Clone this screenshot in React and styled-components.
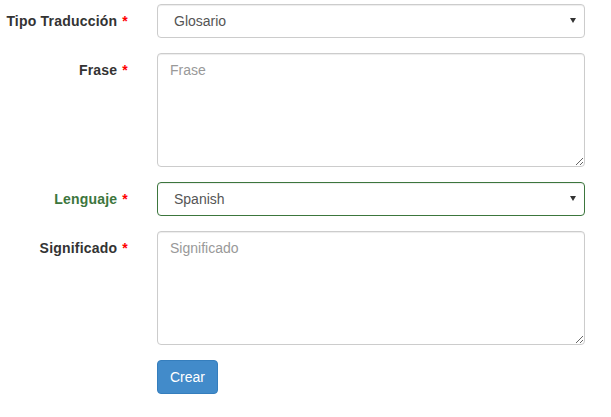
import React from 'react';
import { useState } from 'react';
import styled, { createGlobalStyle } from 'styled-components';

const GlobalStyle = createGlobalStyle`
   * {
      box-sizing: border-box;
   }
   body {
      margin: 0;
      background: #fff;
      font-family: "Liberation Sans", Arial, Helvetica, sans-serif;
      font-size: 14px;
      line-height: 20px;
      color: #333;
   }
`;

const Form = styled.form`
   display: flex;
   flex-direction: column;
   gap: 15px;
   padding: 4px 26px 0 0;
`;

const FormGroup = styled.div`
   display: grid;
   grid-template-columns: 128px 1fr;
   column-gap: 29px;
   align-items: start;
`;

const Label = styled.label`
   padding-top: 7px;
   text-align: right;
   font-weight: bold;
   letter-spacing: 0.2px;
   white-space: nowrap;
   color: ${props => props.success ? '#3c763d' : '#333'};
`;

const Required = styled.span`
   color: #f00;
   margin-left: 1px;
`;

const controlStyles = `
   display: block;
   width: 100%;
   margin: 0;
   font-family: inherit;
   font-size: 14px;
   line-height: 20px;
   color: #555;
   background-color: #fff;
   border: 1px solid #ccc;
   border-radius: 4px;
   box-shadow: inset 0 1px 1px rgba(0, 0, 0, 0.075);
   outline: none;
`;

const SelectWrapper = styled.div`
   position: relative;

   &::after {
      content: '';
      position: absolute;
      right: 9px;
      top: 14px;
      width: 0;
      height: 0;
      border-left: 3.5px solid transparent;
      border-right: 3.5px solid transparent;
      border-top: 5px solid #333;
      pointer-events: none;
   }
`;

const Select = styled.select`
   ${controlStyles}
   appearance: none;
   -webkit-appearance: none;
   height: 34px;
   padding: 6px 24px 6px 16px;
   border-color: ${props => props.success ? '#3c763d' : '#ccc'};
`;

const TextArea = styled.textarea`
   ${controlStyles}
   height: 114px;
   padding: 6px 12px;
   resize: vertical;

   &::placeholder {
      color: #999;
   }
`;

const PrimaryButton = styled.button`
   grid-column: 2;
   justify-self: start;
   height: 34px;
   padding: 6px 12px;
   font-family: inherit;
   font-size: 14px;
   line-height: 20px;
   color: #fff;
   background-color: #428bca;
   border: 1px solid #357ebd;
   border-radius: 4px;
   cursor: pointer;
`;

const App = () => {
    const [tipo, setTipo] = useState('glosario');
    const [frase, setFrase] = useState('');
    const [lenguaje, setLenguaje] = useState('es');
    const [significado, setSignificado] = useState('');

    const handleSubmit = (e) => {
        e.preventDefault();
    }

    return (
        <>
            <GlobalStyle />
            <Form onSubmit={handleSubmit}>
                <FormGroup>
                    <Label>Tipo Traducción <Required>*</Required></Label>
                    <SelectWrapper>
                        <Select value={tipo} onChange={(e) => setTipo(e.target.value)}>
                            <option value="glosario">Glosario</option>
                            <option value="frase">Frase</option>
                        </Select>
                    </SelectWrapper>
                </FormGroup>
                <FormGroup>
                    <Label>Frase <Required>*</Required></Label>
                    <TextArea rows={5} placeholder="Frase" value={frase} onChange={(e) => setFrase(e.target.value)} />
                </FormGroup>
                <FormGroup>
                    <Label success>Lenguaje <Required>*</Required></Label>
                    <SelectWrapper>
                        <Select success value={lenguaje} onChange={(e) => setLenguaje(e.target.value)}>
                            <option value="es">Spanish</option>
                            <option value="en">English</option>
                        </Select>
                    </SelectWrapper>
                </FormGroup>
                <FormGroup>
                    <Label>Significado <Required>*</Required></Label>
                    <TextArea rows={5} placeholder="Significado" value={significado} onChange={(e) => setSignificado(e.target.value)} />
                </FormGroup>
                <FormGroup>
                    <PrimaryButton type="submit">Crear</PrimaryButton>
                </FormGroup>
            </Form>
        </>
    )
}

export default App
